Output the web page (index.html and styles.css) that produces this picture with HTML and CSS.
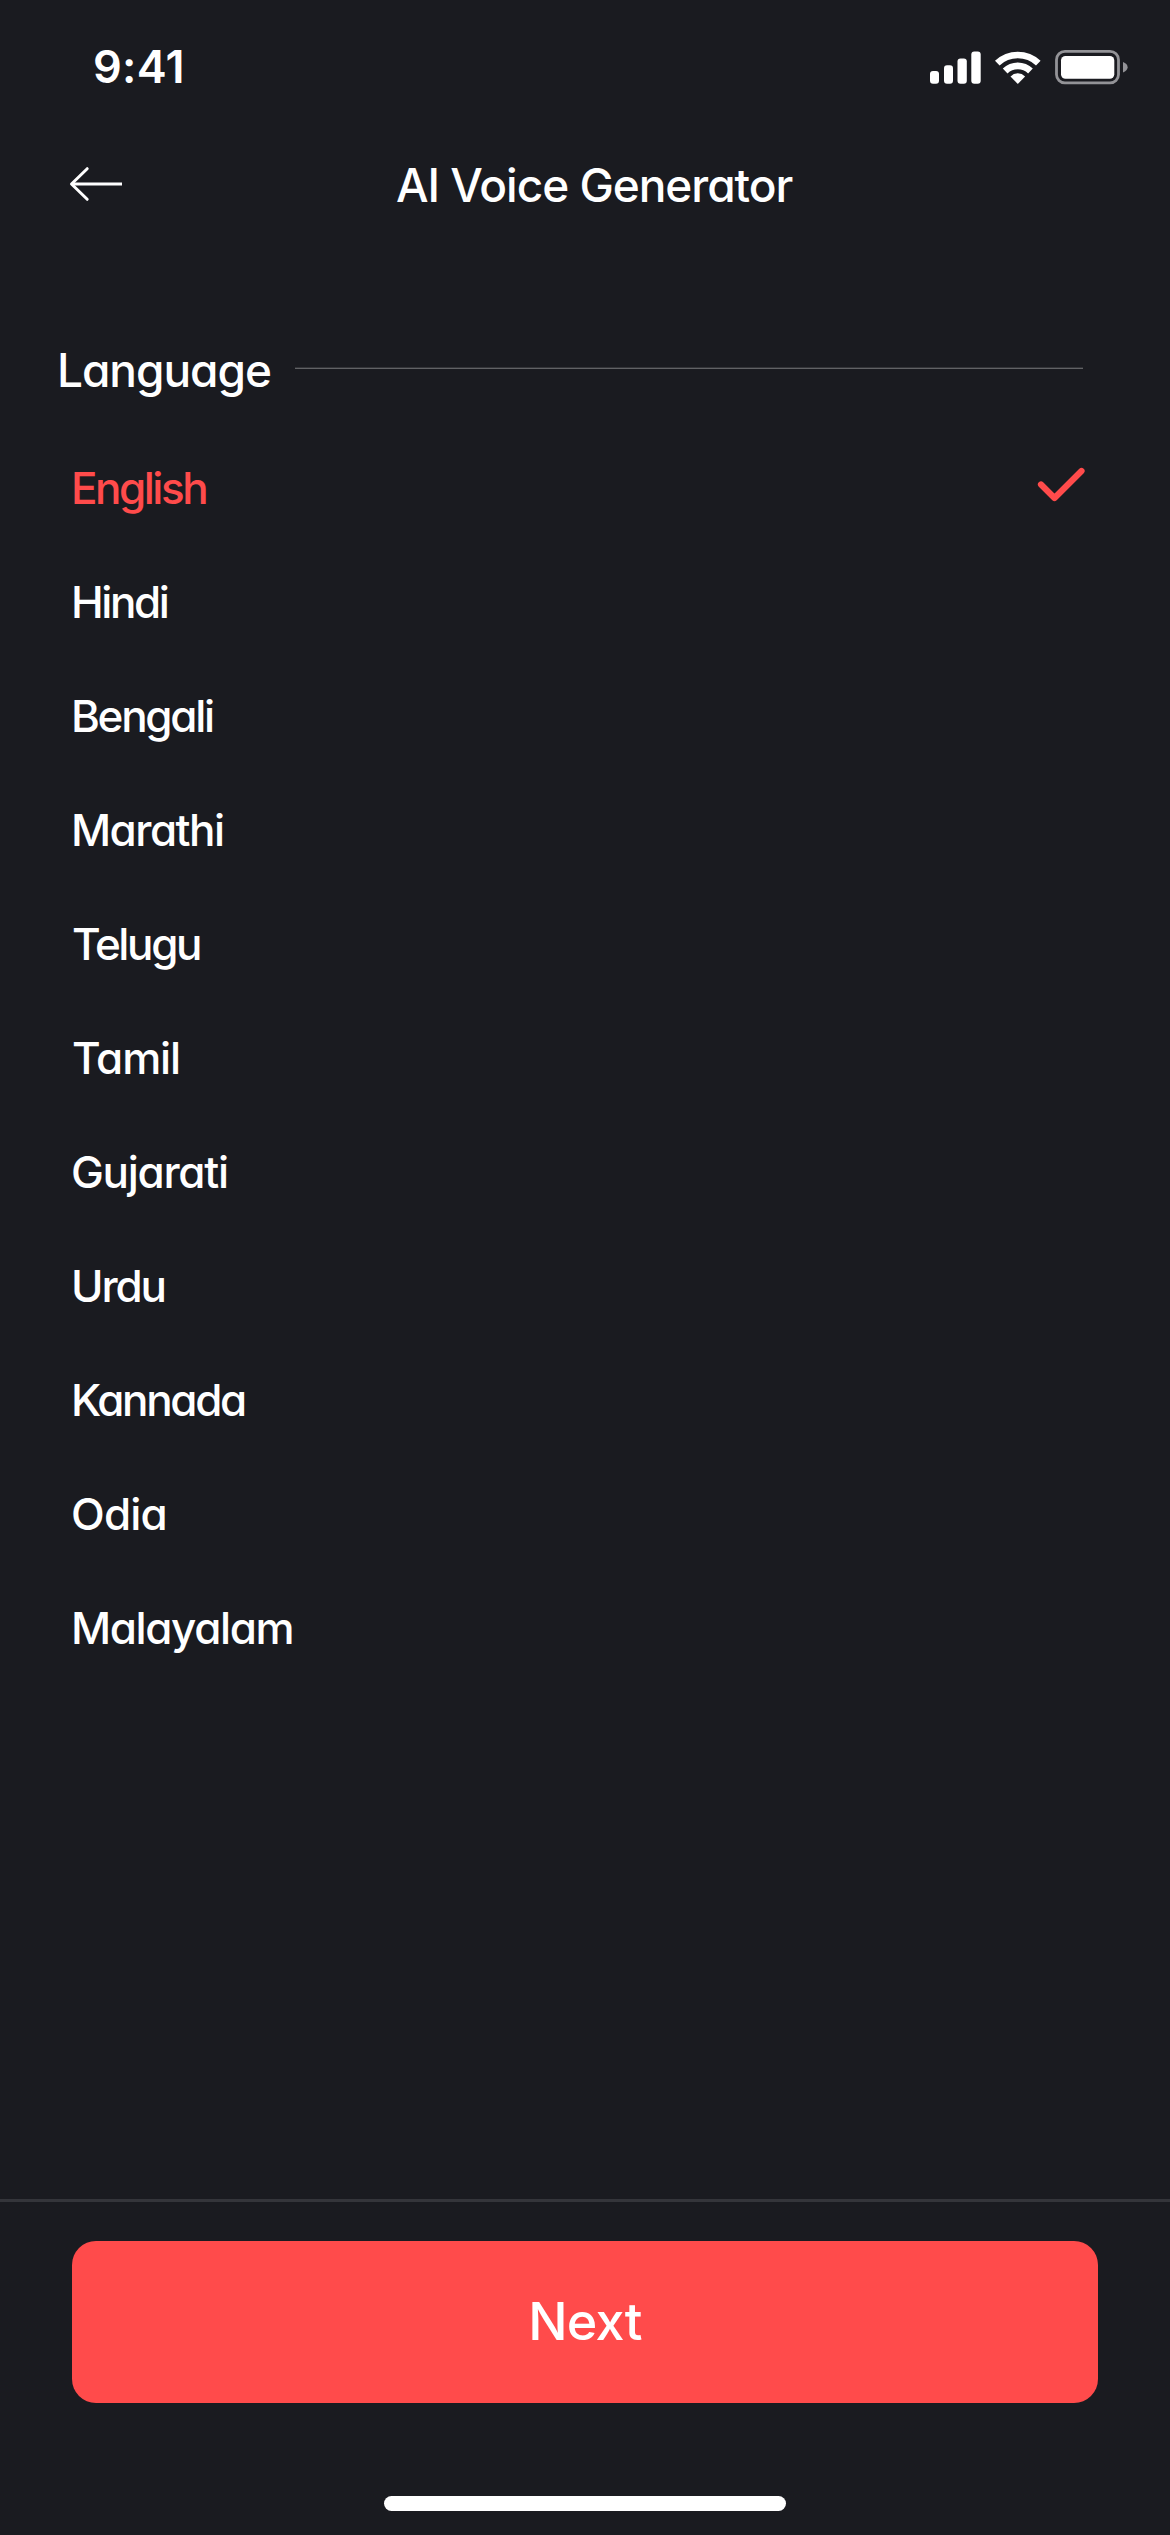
FILE: index.html
```html
<!DOCTYPE html>
<html lang="en">
<head>
<meta charset="utf-8">
<title>AI Voice Generator</title>
<link rel="stylesheet" href="styles.css">
</head>
<body>
<div class="screen">
  <div class="status">
    <span class="time">9:41</span>
    <svg class="status-icons" width="232" height="40" viewBox="900 48 232 40" fill="#fff">
      <rect x="930" y="71" width="9" height="12.7" rx="3"/>
      <rect x="944" y="65.3" width="9" height="18.4" rx="3"/>
      <rect x="957.5" y="58.6" width="9.3" height="25.1" rx="3"/>
      <rect x="971.3" y="51.6" width="9.4" height="32.1" rx="3"/>
      <path d="M995 60.8a33 33 0 0 1 45.6 0l-4.6 4.7a26.300 26.300 0 0 0-36.400 0Z"/>
      <path d="M1002.800 68.500a21.700 21.700 0 0 1 30 0l-4.700 4.900a15 15 0 0 0-20.600 0Z"/>
      <path d="M1010.500 76.400a10.300 10.300 0 0 1 14.600 0l-7.300 7.500Z"/>
      <rect x="1056.500" y="51.300" width="62" height="31.600" rx="8.500" fill="none" stroke="#939397" stroke-width="2.800"/>
      <rect x="1061" y="56" width="53.300" height="22.800" rx="4.500"/>
      <path d="M1123 62c2.800 1 4.600 2.800 4.600 5.200s-1.800 4.200-4.600 5.200Z" fill="#939397"/>
    </svg>
  </div>
  <header class="header">
    <svg class="back" width="54" height="36" viewBox="0 0 54 36" fill="none" stroke="#fff" stroke-width="3" stroke-linecap="round" stroke-linejoin="round">
      <path d="M18.200 2.700 2.500 18 18.200 33.300"/><path d="M3 18H53" stroke-linecap="butt"/>
    </svg>
    <h1 class="title">AI Voice Generator</h1>
  </header>
  <main class="main">
    <div class="section"><h2 class="heading">Language</h2><div class="rule"></div></div>
    <ul class="list">
      <li class="row selected"><span class="english">English</span>
        <svg class="check" width="50" height="36" viewBox="0 0 50 36" fill="none" stroke="#ff4b4b" stroke-width="6.200" stroke-linecap="round" stroke-linejoin="round"><path d="M5 17.500 18.500 31 45.500 4"/></svg>
      </li>
      <li class="row"><span class="hindi">Hindi</span></li>
      <li class="row"><span class="bengali">Bengali</span></li>
      <li class="row"><span class="marathi">Marathi</span></li>
      <li class="row"><span class="telugu">Telugu</span></li>
      <li class="row"><span class="tamil">Tamil</span></li>
      <li class="row"><span class="gujarati">Gujarati</span></li>
      <li class="row"><span class="urdu">Urdu</span></li>
      <li class="row"><span class="kannada">Kannada</span></li>
      <li class="row"><span class="odia">Odia</span></li>
      <li class="row"><span class="malayalam">Malayalam</span></li>
    </ul>
  </main>
  <footer class="footer">
    <button class="next" type="button">Next</button>
    <div class="home"></div>
  </footer>
</div>
</body>
</html>
```
FILE: styles.css
```css
* { box-sizing: border-box; margin: 0; padding: 0; }
body {
  background: #1a1b20;
  color: #fff;
  font-family: "Inter", sans-serif;
  font-weight: 500;
  font-feature-settings: "cv11";
}
svg { display: block; }
.screen { width: 1170px; height: 2535px; display: flex; flex-direction: column; }
.status {
  height: 87px;
  padding: 47px 38px 0 93px;
  display: flex;
  justify-content: space-between;
}
.time { font-size: 45px; font-weight: 600; line-height: 40px; letter-spacing: .3px; }
.status-icons { margin-top: 1px; }
.header {
  height: 196px;
  padding-left: 69px;
  display: flex;
  align-items: center;
}
.back { margin-top: -2px; }
.title { margin-left: 273px; font-size: 46px; font-weight: 500; letter-spacing: -1.04px; white-space: nowrap; }
.main { flex: 1; padding-top: 58px; }
.section { height: 58px; padding: 0 87px 0 57px; display: flex; align-items: center; gap: 24px; }
.heading { font-size: 46px; font-weight: 500; line-height: 58px; letter-spacing: -1.04px; }
.rule { flex: 1; height: 2px; margin-bottom: 4px; background: linear-gradient(#333438 50%, #616265 50%); }
.list { list-style: none; margin-top: 32px; }
.row {
  height: 114px;
  padding: 0 84px 0 71px;
  display: flex;
  align-items: center;
  justify-content: space-between;
  font-size: 44px;
  line-height: 114px;
}
.selected { color: #ff4b4b; }
.check { margin-bottom: 6px; }
.english { letter-spacing: -2.5px; }
.hindi { letter-spacing: -2.46px; }
.bengali { letter-spacing: -2.3px; }
.marathi { letter-spacing: -1.54px; }
.telugu { letter-spacing: -2.39px; padding-left: 1px; }
.tamil { letter-spacing: -1.17px; padding-left: 1px; }
.gujarati { letter-spacing: -1.29px; }
.urdu { letter-spacing: -2.15px; }
.kannada { letter-spacing: -2.34px; }
.odia { letter-spacing: -.84px; }
.malayalam { letter-spacing: -1.39px; }
.footer {
  height: 336px;
  padding: 39px 72px 24px;
  border-top: 3px solid #34353a;
  display: flex;
  flex-direction: column;
  align-items: center;
  justify-content: space-between;
}
.next {
  width: 1026px;
  height: 162px;
  padding-bottom: 2px;
  border: 0;
  border-radius: 24px;
  background: #ff4b4b;
  color: #fff;
  font: inherit;
  font-size: 52px;
  font-feature-settings: "cv11";
  letter-spacing: -.68px;
}
.home { width: 402px; height: 15px; border-radius: 8px; background: #fff; }
```
